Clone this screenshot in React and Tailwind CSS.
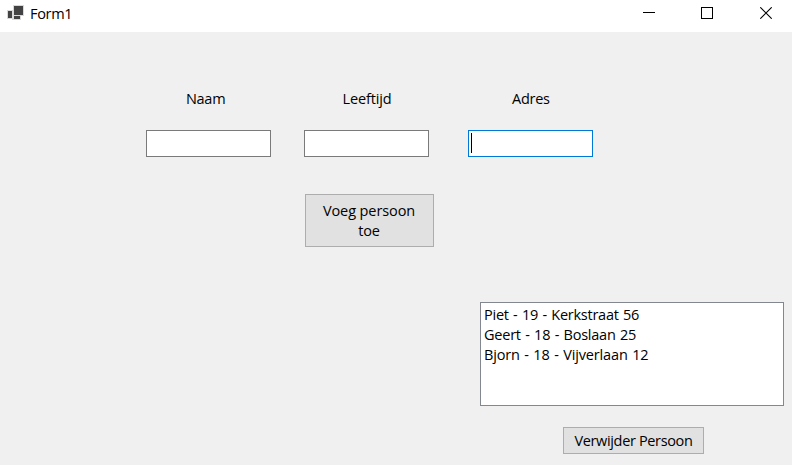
import React from "react";

function AppIcon() {
  return (
    <svg width="18" height="18" viewBox="0 0 18 18" className="ml-[6px] shrink-0" shapeRendering="crispEdges">
      <path d="M7 0h11v11h-3v4H6v-1H1V5h6z" fill="#d9d9d9" />
      <path d="M8 1h9v9H8zM2 6h4v7H2zM8 11h6v3H8z" fill="#424242" />
    </svg>
  );
}

function TitleBar() {
  return (
    <header className="flex h-8 items-start bg-white">
      <div className="flex grow pt-[5px]">
        <AppIcon />
        <span className="ml-[6px] h-5 text-[14.5px] leading-[17px] tracking-[-0.3px]">Form1</span>
      </div>
      <div className="flex items-center pt-[7px] pr-5">
        <svg width="12" height="12" className="mr-[46px]" shapeRendering="crispEdges">
          <path d="M0 5.5h12" stroke="#000" />
        </svg>
        <svg width="12" height="12" className="mr-[47px]" shapeRendering="crispEdges">
          <path d="M.5.5h11v11H.5z" fill="none" stroke="#000" />
        </svg>
        <svg width="12" height="12">
          <path d="M.3.3l11.4 11.4M11.7.3L.3 11.7" stroke="#000" strokeWidth="1.1" />
        </svg>
      </div>
    </header>
  );
}

function Field({ label, className, labelClass, focused }) {
  return (
    <label className={"flex w-[125px] flex-col " + className}>
      <span className={"h-5 leading-5 whitespace-nowrap " + labelClass}>{label}</span>
      <span className={"mt-[21px] flex h-[27px] border bg-white pt-[2px] pl-[2px] " + (focused ? "border-[#0078d7]" : "border-[#7a7a7a]")}>
        {focused && <span className="h-5 w-px bg-black" />}
      </span>
    </label>
  );
}

export default function App() {
  return (
    <div className="flex h-[465px] w-[792px] flex-col overflow-hidden bg-[#f0f0f0] font-['Open_Sans','Noto_Sans',sans-serif] text-[14.5px] text-black">
      <TitleBar />
      <main className="flex flex-col">
        <div className="flex pt-[57px] pl-[146px]">
          <Field label="Naam" labelClass="pl-[40px] tracking-[-0.3px]" className="" />
          <Field label="Leeftijd" labelClass="pl-[38.5px] tracking-[-0.15px]" className="ml-[33px]" />
          <Field label="Adres" labelClass="pl-[44px] tracking-[-0.25px]" className="ml-[39px]" focused />
        </div>
        <button className="mt-[37px] ml-[305px] h-[53px] w-[129px] border border-[#adadad] bg-[#e1e1e1] pr-[13px] pl-3 leading-5 tracking-[-0.1px]">
          Voeg persoon toe
        </button>
        <ul className="mt-[55px] ml-[480px] h-[104px] w-[304px] border border-[#828790] bg-white pt-[2px] pl-[3px] leading-5 tracking-[-0.25px] [word-spacing:0.9px]">
          <li>Piet - 19 - Kerkstraat 56</li>
          <li className="tracking-[-0.23px]">Geert - 18 - Boslaan 25</li>
          <li className="tracking-[-0.15px]">Bjorn - 18 - Vijverlaan 12</li>
        </ul>
        <button className="mt-[21px] ml-[563px] h-[27px] w-[141px] border border-[#adadad] bg-[#e1e1e1] leading-5 tracking-[-0.35px] whitespace-nowrap">
          Verwijder Persoon
        </button>
      </main>
    </div>
  );
}
